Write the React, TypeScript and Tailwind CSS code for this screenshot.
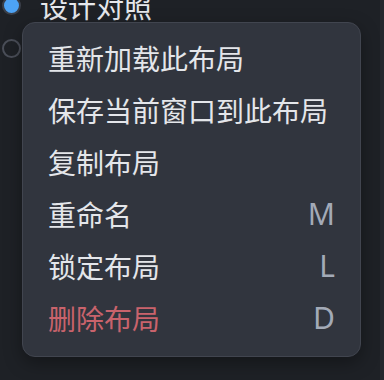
import React from 'react';

type Item = { label: string; shortcut?: string; danger?: boolean };

const items: Item[] = [
  { label: '重新加载此布局' },
  { label: '保存当前窗口到此布局' },
  { label: '复制布局' },
  { label: '重命名', shortcut: 'M' },
  { label: '锁定布局', shortcut: 'L' },
  { label: '删除布局', shortcut: 'D', danger: true },
];

const Radio: React.FC<{ checked?: boolean }> = ({ checked }) => (
  <span
    className={`w-[19px] h-[19px] rounded-full flex items-center justify-center shrink-0 ${
      checked ? 'bg-[#4da3f5] border-2 border-[#3a3f49]' : 'border-2 border-[#4a4e58]'
    }`}
  />
);

export default function App() {
  return (
    <div
      className="w-full h-[380px] flex bg-[#1e2126] overflow-hidden"
      style={{ fontFamily: '"Noto Sans CJK SC", "Noto Sans", sans-serif' }}
    >
      <div className="relative flex-1">
        {/* layout list behind the menu */}
        <div className="flex flex-col mt-[-16px]">
          <div className="h-[43px] flex items-center pl-[2px] gap-[19px]">
            <Radio checked />
            <span className="text-[28px] leading-none text-[#e6e8ec]">设计对照</span>
          </div>
          <div className="h-[43px] flex items-center pl-[2px]">
            <Radio />
          </div>
        </div>

        {/* context menu */}
        <div className="absolute left-[22px] top-[22px] w-[339px] rounded-[13px] border border-[#41454f] bg-[#31353e] pt-[9px] pb-[12px] shadow-[0_6px_18px_rgba(0,0,0,0.35)]">
          {items.map((it) => (
            <div key={it.label} className="h-[52px] flex items-center justify-between pl-[25px] pr-[25px]">
              <span className={`text-[28px] leading-none ${it.danger ? 'text-[#c9636c]' : 'text-[#e4e6ea]'}`}>
                {it.label}
              </span>
              {it.shortcut && (
                <span
                  className="text-[30px] leading-none text-[#a3aab7]"
                  style={{ fontFamily: '"Noto Sans", sans-serif' }}
                >
                  {it.shortcut}
                </span>
              )}
            </div>
          ))}
        </div>
      </div>
      <div className="w-[4px] bg-[#24272d]" />
    </div>
  );
}
